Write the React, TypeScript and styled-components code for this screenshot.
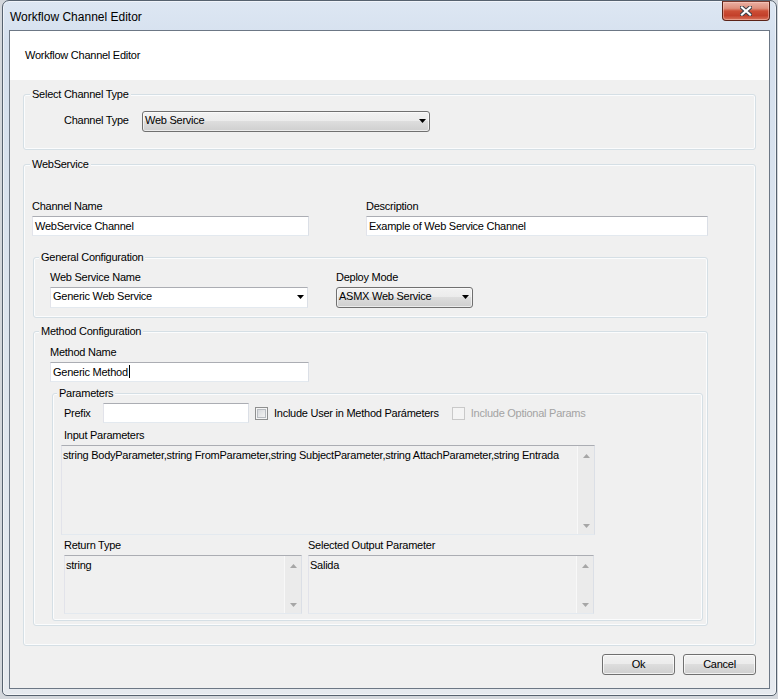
import React from "react";
import styled, { createGlobalStyle } from "styled-components";

const GlobalStyle = createGlobalStyle`
  html, body { margin: 0; padding: 0; }
  * { box-sizing: border-box; }
  body {
    width: 778px;
    height: 699px;
    overflow: hidden;
    background: #d3d7dc;
    font-family: "Liberation Sans", Arial, sans-serif;
    font-size: 11px;
    color: #000;
  }
  #root { width: 778px; height: 699px; }
`;

const Window = styled.div`
  margin-left: 2px;
  width: 775px;
  height: 696px;
  border: 1px solid #56626f;
  border-radius: 7px 7px 5px 5px;
  background: linear-gradient(180deg, #dde7f3 0%, #d5e0ee 6%, #dfe6ee 60%, #e6eaef 100%);
  box-shadow: inset 0 0 0 1px rgba(255, 255, 255, 0.55);
  padding: 0 6px 6px 6px;
  display: flex;
  flex-direction: column;
`;

const TitleBar = styled.div`
  height: 29px;
  display: flex;
  justify-content: space-between;
  align-items: flex-start;
  padding-top: 1px;
`;

const Title = styled.div`
  padding: 8px 0 0 1px;
  font-size: 12px;
  line-height: 14px;
  color: #000;
  white-space: nowrap;
`;

const CloseButton = styled.div`
  width: 48px;
  height: 20px;
  margin-top: -1px;
  border: 1px solid #5b2318;
  border-top-color: #7a3a2e;
  border-radius: 0 0 4px 4px;
  background: linear-gradient(
    180deg,
    #eab0a3 0%,
    #de8f7c 35%,
    #cc4e35 50%,
    #c3402a 75%,
    #d8745c 100%
  );
  box-shadow: inset 0 0 0 1px rgba(255, 215, 205, 0.45);
  display: flex;
  align-items: center;
  justify-content: center;
`;

const Client = styled.div`
  flex: 1;
  border: 1px solid #6c7785;
  background: #f0f0f0;
  display: flex;
  flex-direction: column;
`;

const Header = styled.div`
  height: 49px;
  background: #fff;
  padding: 18px 0 0 15px;
  line-height: 13px;
  letter-spacing: -0.25px;
  white-space: nowrap;
`;

const Body = styled.div`
  flex: 1;
  padding: 14px 13px 0 13px;
  display: flex;
  flex-direction: column;
`;

const GroupBox = styled.div<{ $pad: string; $mt?: number; $ml?: number; $w?: number }>`
  position: relative;
  border: 1px solid #d5dfe5;
  border-radius: 3px;
  box-shadow: inset 0 0 0 1px #fbfcfd;
  padding: ${(p) => p.$pad};
  margin-top: ${(p) => p.$mt ?? 0}px;
  margin-left: ${(p) => p.$ml ?? 0}px;
  width: ${(p) => (p.$w ? `${p.$w}px` : "auto")};
`;

const Legend = styled.span<{ $inset: number }>`
  position: absolute;
  top: -7px;
  left: ${(p) => p.$inset}px;
  padding: 0 2px;
  background: #f0f0f0;
  line-height: 13px;
  letter-spacing: -0.25px;
  white-space: nowrap;
`;

const Columns = styled.div<{ $cols: string; $gap: number }>`
  display: grid;
  grid-template-columns: ${(p) => p.$cols};
  column-gap: ${(p) => p.$gap}px;
  align-items: start;
`;

const Field = styled.div`
  display: flex;
  flex-direction: column;
  gap: 3px;
`;

const Label = styled.div<{ $disabled?: boolean }>`
  line-height: 13px;
  letter-spacing: -0.25px;
  white-space: nowrap;
  color: ${(p) => (p.$disabled ? "#a3a3a3" : "#000")};
`;

const RowLabel = styled(Label)<{ $w: number }>`
  width: ${(p) => p.$w}px;
  flex: none;
`;

const InlineRow = styled.div`
  display: flex;
  align-items: flex-start;
`;

const ChannelTypeLabel = styled(Label)`
  width: 78px;
  padding: 3px 0 0 40px;
  box-sizing: content-box;
`;

const TextBox = styled.div<{ $w?: number }>`
  height: 20px;
  width: ${(p) => (p.$w ? `${p.$w}px` : "100%")};
  background: #fff;
  border: 1px solid;
  border-color: #abadb3 #dbdfe6 #e3e9ef #e2e3ea;
  padding: 0 2px;
  line-height: 18px;
  letter-spacing: -0.25px;
  white-space: nowrap;
  overflow: hidden;
`;

const Caret = styled.span`
  display: inline-block;
  width: 1px;
  height: 13px;
  background: #000;
  vertical-align: -2px;
  margin-left: 1px;
`;

const ComboButton = styled.div<{ $w: number }>`
  height: 21px;
  width: ${(p) => p.$w}px;
  border: 1px solid #707070;
  border-radius: 3px;
  background: linear-gradient(180deg, #f2f2f2 0%, #ebebeb 50%, #dddddd 50%, #cfcfcf 100%);
  box-shadow: inset 0 0 0 1px rgba(255, 255, 255, 0.6);
  padding: 0 3px 2px 2px;
  display: flex;
  align-items: center;
  justify-content: space-between;
  line-height: 17px;
  letter-spacing: -0.25px;
  white-space: nowrap;
`;

const ComboEdit = styled.div`
  height: 21px;
  width: 100%;
  background: #fff;
  border: 1px solid;
  border-color: #abadb3 #dbdfe6 #e3e9ef #e2e3ea;
  padding: 0 3px 2px 2px;
  display: flex;
  align-items: center;
  justify-content: space-between;
  line-height: 17px;
  letter-spacing: -0.25px;
  white-space: nowrap;
`;

const Memo = styled.div<{ $w: number; $h: number; $ml?: number }>`
  width: ${(p) => p.$w}px;
  height: ${(p) => p.$h}px;
  margin-left: ${(p) => p.$ml ?? 0}px;
  display: flex;
  background: #f0f0f0;
  border: 1px solid;
  border-color: #abadb3 #dbdfe6 #e3e9ef #e2e3ea;
`;

const MemoText = styled.div`
  flex: 1;
  padding: 3px 2px 0 1px;
  line-height: 13px;
  letter-spacing: -0.25px;
  white-space: nowrap;
  overflow: hidden;
`;

const ScrollBar = styled.div`
  width: 17px;
  flex: none;
  display: flex;
  flex-direction: column;
  justify-content: space-between;
  background: #ebebeb;
  border-left: 1px solid #f8f8f8;
`;

const ScrollButton = styled.div<{ $up?: boolean }>`
  height: 17px;
  display: flex;
  align-items: center;
  justify-content: center;
  padding-top: ${(p) => (p.$up ? 2 : 0)}px;
`;

const ParamsRow = styled.div`
  display: flex;
  align-items: center;
  height: 20px;
`;

const CheckLabel = styled.div<{ $ml: number }>`
  display: flex;
  align-items: center;
  gap: 6px;
  margin-left: ${(p) => p.$ml}px;
`;

const CheckBox = styled.div<{ $disabled?: boolean }>`
  width: 13px;
  height: 13px;
  flex: none;
  border: 1px solid ${(p) => (p.$disabled ? "#c9c9c9" : "#8e8f8f")};
  background: ${(p) =>
    p.$disabled ? "#f4f4f4" : "linear-gradient(135deg, #cfd2d6 0%, #eeeeee 70%, #f8f8f8 100%)"};
  box-shadow: ${(p) =>
    p.$disabled ? "none" : "inset 0 0 0 1px #f5f5f5, inset 0 0 0 2px #b8bcc1"};
`;

const Spacer = styled.div<{ $h: number }>`
  height: ${(p) => p.$h}px;
  flex: none;
`;

const Footer = styled.div`
  display: flex;
  justify-content: flex-end;
  gap: 8px;
  margin-top: 8px;
`;

const Button = styled.div`
  width: 73px;
  height: 21px;
  border: 1px solid #707070;
  border-radius: 3px;
  background: linear-gradient(180deg, #f2f2f2 0%, #ebebeb 50%, #dddddd 50%, #cfcfcf 100%);
  box-shadow: inset 0 0 0 1px rgba(255, 255, 255, 0.7);
  text-align: center;
  line-height: 19px;
  letter-spacing: -0.25px;
`;

const DownArrow = ({ color = "#000" }: { color?: string }) => (
  <svg width="7" height="4" viewBox="0 0 7 4">
    <polygon points="0,0 7,0 3.5,4" fill={color} />
  </svg>
);

const UpArrow = ({ color = "#a6a6a6" }: { color?: string }) => (
  <svg width="7" height="4" viewBox="0 0 7 4">
    <polygon points="0,4 7,4 3.5,0" fill={color} />
  </svg>
);

const CloseGlyph = () => (
  <svg width="12" height="10" viewBox="0 0 12 10">
    <path d="M2 1.5 L10 8.5 M10 1.5 L2 8.5" stroke="#3a3f48" strokeWidth="4.2" strokeLinecap="square" />
    <path d="M2 1.5 L10 8.5 M10 1.5 L2 8.5" stroke="#ffffff" strokeWidth="2.2" strokeLinecap="square" />
  </svg>
);

const MemoBox = ({
  w,
  h,
  ml,
  text,
}: {
  w: number;
  h: number;
  ml?: number;
  text: string;
}) => (
  <Memo $w={w} $h={h} $ml={ml}>
    <MemoText>{text}</MemoText>
    <ScrollBar>
      <ScrollButton $up>
        <UpArrow />
      </ScrollButton>
      <ScrollButton>
        <DownArrow color="#a6a6a6" />
      </ScrollButton>
    </ScrollBar>
  </Memo>
);

export default function App() {
  return (
    <>
      <GlobalStyle />
      <Window>
        <TitleBar>
          <Title>Workflow Channel Editor</Title>
          <CloseButton>
            <CloseGlyph />
          </CloseButton>
        </TitleBar>
        <Client>
          <Header>Workflow Channel Editor</Header>
          <Body>
            <GroupBox $pad="16px 0 17px 0">
              <Legend $inset={6}>Select Channel Type</Legend>
              <InlineRow>
                <ChannelTypeLabel>Channel Type</ChannelTypeLabel>
                <ComboButton $w={288}>
                  <span>Web Service</span>
                  <DownArrow />
                </ComboButton>
              </InlineRow>
            </GroupBox>

            <GroupBox $pad="35px 0 19px 8px" $mt={14}>
              <Legend $inset={6}>WebService</Legend>
              <Columns $cols="277px 342px" $gap={57}>
                <Field>
                  <Label>Channel Name</Label>
                  <TextBox>WebService Channel</TextBox>
                </Field>
                <Field>
                  <Label>Description</Label>
                  <TextBox>Example of Web Service Channel</TextBox>
                </Field>
              </Columns>

              <GroupBox $pad="13px 0 9px 16px" $mt={21} $ml={1} $w={675}>
                <Legend $inset={5}>General Configuration</Legend>
                <Columns $cols="258px 137px" $gap={28}>
                  <Field>
                    <Label>Web Service Name</Label>
                    <ComboEdit>
                      <span>Generic Web Service</span>
                      <DownArrow />
                    </ComboEdit>
                  </Field>
                  <Field>
                    <Label>Deploy Mode</Label>
                    <ComboButton $w={137}>
                      <span>ASMX Web Service</span>
                      <DownArrow />
                    </ComboButton>
                  </Field>
                </Columns>
              </GroupBox>

              <GroupBox $pad="14px 4px 4px 16px" $mt={13} $ml={1} $w={675}>
                <Legend $inset={5}>Method Configuration</Legend>
                <Field>
                  <Label>Method Name</Label>
                  <TextBox $w={259}>
                    Generic Method
                    <Caret />
                  </TextBox>
                </Field>

                <GroupBox $pad="9px 0 6px 11px" $mt={11} $ml={2}>
                  <Legend $inset={4}>Parameters</Legend>
                  <ParamsRow>
                    <RowLabel $w={39}>Prefix</RowLabel>
                    <TextBox $w={146} />
                    <CheckLabel $ml={6}>
                      <CheckBox />
                      <Label>Include User in Method Parámeters</Label>
                    </CheckLabel>
                    <CheckLabel $ml={13}>
                      <CheckBox $disabled />
                      <Label $disabled>Include Optional Params</Label>
                    </CheckLabel>
                  </ParamsRow>
                  <Spacer $h={6} />
                  <Field>
                    <Label>Input Parameters</Label>
                    <MemoBox
                      w={534}
                      h={90}
                      ml={-3}
                      text="string BodyParameter,string FromParameter,string SubjectParameter,string AttachParameter,string Entrada"
                    />
                  </Field>
                  <Spacer $h={4} />
                  <Columns $cols="238px 286px" $gap={6}>
                    <Field>
                      <Label>Return Type</Label>
                      <MemoBox w={238} h={59} text="string" />
                    </Field>
                    <Field>
                      <Label>Selected Output Parameter</Label>
                      <MemoBox w={286} h={59} text="Salida" />
                    </Field>
                  </Columns>
                </GroupBox>
              </GroupBox>
            </GroupBox>

            <Footer>
              <Button>Ok</Button>
              <Button>Cancel</Button>
            </Footer>
          </Body>
        </Client>
      </Window>
    </>
  );
}
